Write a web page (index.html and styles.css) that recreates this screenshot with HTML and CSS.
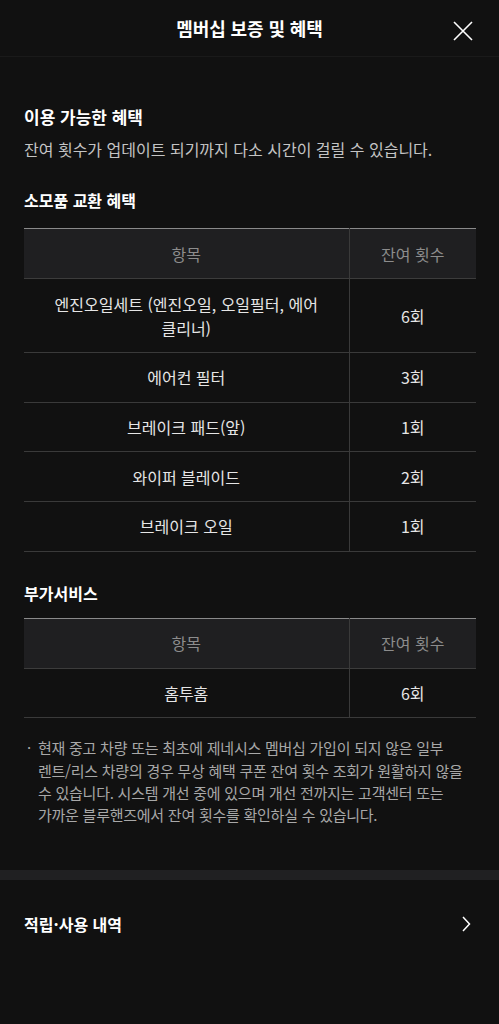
FILE: index.html
```html
<!DOCTYPE html>
<html lang="ko">
<head>
<meta charset="utf-8">
<link rel="stylesheet" href="styles.css">
</head>
<body>
<div class="page">
  <header class="top">
    <h1 class="title">멤버십 보증 및 혜택</h1>
    <button class="close" aria-label="닫기">
      <svg width="22" height="22" viewBox="0 0 22 22"><path d="M2 2L20 20M20 2L2 20" stroke="#fff" stroke-width="1.6" fill="none"/></svg>
    </button>
  </header>
  <main class="content">
    <h2 class="h2 first">이용 가능한 혜택</h2>
    <p class="sub">잔여 횟수가 업데이트 되기까지 다소 시간이 걸릴 수 있습니다.</p>

    <h3 class="h3">소모품 교환 혜택</h3>
    <table class="tbl">
      <thead><tr><th class="c1">항목</th><th class="c2">잔여 횟수</th></tr></thead>
      <tbody>
        <tr class="tall"><td class="c1">엔진오일세트 (엔진오일, 오일필터, 에어 클리너)</td><td class="c2">6회</td></tr>
        <tr><td class="c1">에어컨 필터</td><td class="c2">3회</td></tr>
        <tr><td class="c1">브레이크 패드(앞)</td><td class="c2">1회</td></tr>
        <tr><td class="c1">와이퍼 블레이드</td><td class="c2">2회</td></tr>
        <tr><td class="c1">브레이크 오일</td><td class="c2">1회</td></tr>
      </tbody>
    </table>

    <h3 class="h3 second">부가서비스</h3>
    <table class="tbl">
      <thead><tr><th class="c1">항목</th><th class="c2">잔여 횟수</th></tr></thead>
      <tbody>
        <tr><td class="c1">홈투홈</td><td class="c2">6회</td></tr>
      </tbody>
    </table>

    <ul class="note">
      <li>현재 중고 차량 또는 최초에 제네시스 멤버십 가입이 되지 않은 일부<br>렌트/리스 차량의 경우 무상 혜택 쿠폰 잔여 횟수 조회가 원활하지 않을<br>수 있습니다. 시스템 개선 중에 있으며 개선 전까지는 고객센터 또는<br>가까운 블루핸즈에서 잔여 횟수를 확인하실 수 있습니다.</li>
    </ul>
  </main>
  <div class="band"></div>
  <a class="link-row" href="#">
    <span>적립·사용 내역</span>
    <svg width="12" height="18" viewBox="0 0 12 18"><path d="M3 2L9.5 9L3 16" stroke="#fff" stroke-width="1.5" fill="none"/></svg>
  </a>
</div>
</body>
</html>
```

FILE: styles.css
```css
* { box-sizing: border-box; }
html, body { margin: 0; padding: 0; background: #111111; }
body {
  font-family: "Noto Sans CJK KR", "Noto Sans", sans-serif;
  color: #fff;
  min-height: 1024px;
}
.page { width: 499px; }
.top {
  height: 57px;
  display: flex;
  align-items: center;
  justify-content: center;
  position: relative;
  border-bottom: 1px solid #1a1a1a;
}
.title {
  margin: 0;
  font-size: 18px;
  font-weight: 700;
  letter-spacing: -0.1px;
  color: #fff;
}
.close {
  position: absolute;
  right: 25px;
  top: 20px;
  width: 22px;
  height: 22px;
  padding: 0;
  border: 0;
  background: none;
  display: flex;
}
.content { padding: 48px 23px 0 24px; }
.h2 {
  margin: 0;
  font-size: 17px;
  font-weight: 700;
  line-height: 24px;
}
.sub {
  margin: 8px 0 0;
  font-size: 16px;
  line-height: 24px;
  color: #c4c4c4;
}
.h3 {
  margin: 28px 0 17px;
  font-size: 16px;
  font-weight: 700;
  line-height: 22px;
}
.h3.second { margin-top: 30px; margin-bottom: 14px; }
.tbl {
  width: 452px;
  border-collapse: collapse;
  table-layout: fixed;
  border-top: 1.5px solid #8a8a8a;
}
.tbl th, .tbl td {
  text-align: center;
  font-size: 16px;
  line-height: 24px;
  padding: 0 22px;
}
.tbl .c1 { width: 325px; border-right: 1px solid #3a3a3a; }
.tbl .c2 { width: 127px; padding: 0 4px; }
.tbl th {
  background: #1f1f21;
  color: #8c8c8c;
  font-weight: 400;
  height: 50px;
  border-bottom: 1px solid #3c3c3c;
}
.tbl td {
  color: #e6e6e6;
  height: 49.7px;
  border-bottom: 1px solid #3a3a3a;
}
.tbl tr.tall td { height: 74px; }
.note {
  margin: 19px 0 0;
  padding: 0 0 0 14px;
  list-style: none;
}
.note li {
  position: relative;
  font-size: 15px;
  line-height: 22.2px;
  letter-spacing: -0.25px;
  color: #a8a8a8;
  word-break: keep-all;
  white-space: nowrap;
}
.note li::before {
  content: "·";
  position: absolute;
  left: -11px;
  top: 0;
  color: #a8a8a8;
}
.band {
  height: 10px;
  background: #202022;
  margin-top: 44px;
}
.link-row {
  display: flex;
  align-items: center;
  justify-content: space-between;
  padding: 0 27px 0 24px;
  height: 88px;
  text-decoration: none;
  color: #fff;
  font-size: 16px;
  font-weight: 700;
}
```
